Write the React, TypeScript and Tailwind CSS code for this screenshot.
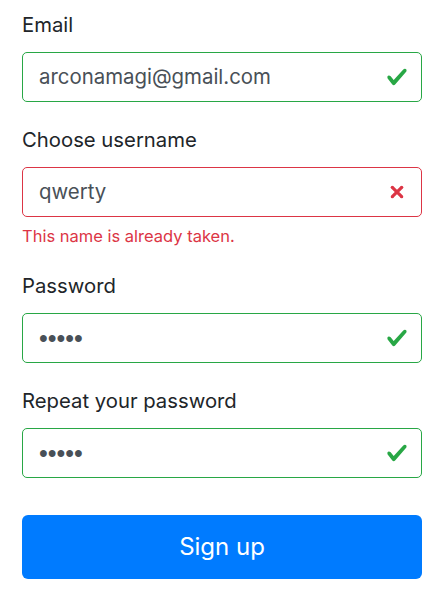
const CheckIcon = () => (
  <svg width="22" height="22" viewBox="0 0 8 8" className="absolute right-[13px] top-1/2 -translate-y-1/2">
    <path
      fill="#28a745"
      d="M2.3 6.73L.6 4.53c-.4-1.04.46-1.4 1.1-.8l1.1 1.4 3.4-3.8c.6-.63 1.6-.27 1.2.7l-4 4.6c-.43.5-.8.4-1.1.1z"
    />
  </svg>
);

const CrossIcon = () => (
  <svg width="22" height="22" viewBox="-2 -2 7 7" fill="#dc3545" className="absolute right-[13px] top-1/2 -translate-y-1/2">
    <path stroke="#dc3545" d="M0 0l3 3m0-3L0 3" />
    <circle r=".5" />
    <circle cx="3" r=".5" />
    <circle cy="3" r=".5" />
    <circle cx="3" cy="3" r=".5" />
  </svg>
);

type FieldProps = {
  label: string;
  value: string;
  valid: boolean;
  secret?: boolean;
  error?: string;
};

const Field = ({ label, value, valid, secret, error }: FieldProps) => {
  return (
    <div className="mb-[23px]">
      <label className="block text-[20.3px] leading-[30px] text-[#212529] mb-3">{label}</label>
      <div
        className={`relative h-[50px] rounded-[5px] border flex items-center pl-4 pr-12 ${
          valid ? "border-[#28a745]" : "border-[#dc3545]"
        }`}
      >
        {secret ? (
          <span className="font-['Liberation_Sans'] text-[25px] leading-none text-[#495057]">{value}</span>
        ) : (
          <span className="text-[20.4px] text-[#495057]">{value}</span>
        )}
        {valid ? <CheckIcon /> : <CrossIcon />}
      </div>
      {error && <p className="mt-[7px] text-[16.5px] leading-6 text-[#dc3545]">{error}</p>}
    </div>
  );
};

export default function App() {
  return (
    <div className="bg-white min-h-screen pl-[22px] pr-[18px] pt-[10px]" style={{ fontFamily: "Inter, 'Noto Sans', sans-serif" }}>
      <Field label="Email" value="arconamagi@gmail.com" valid />
      <Field label="Choose username" value="qwerty" valid={false} error="This name is already taken." />
      <Field label="Password" value="•••••" valid secret />
      <Field label="Repeat your password" value="•••••" valid secret />
      <button className="mt-[14px] w-full h-[64px] rounded-[6px] bg-[#007bff] text-white text-[24px]">
        Sign up
      </button>
    </div>
  );
}
